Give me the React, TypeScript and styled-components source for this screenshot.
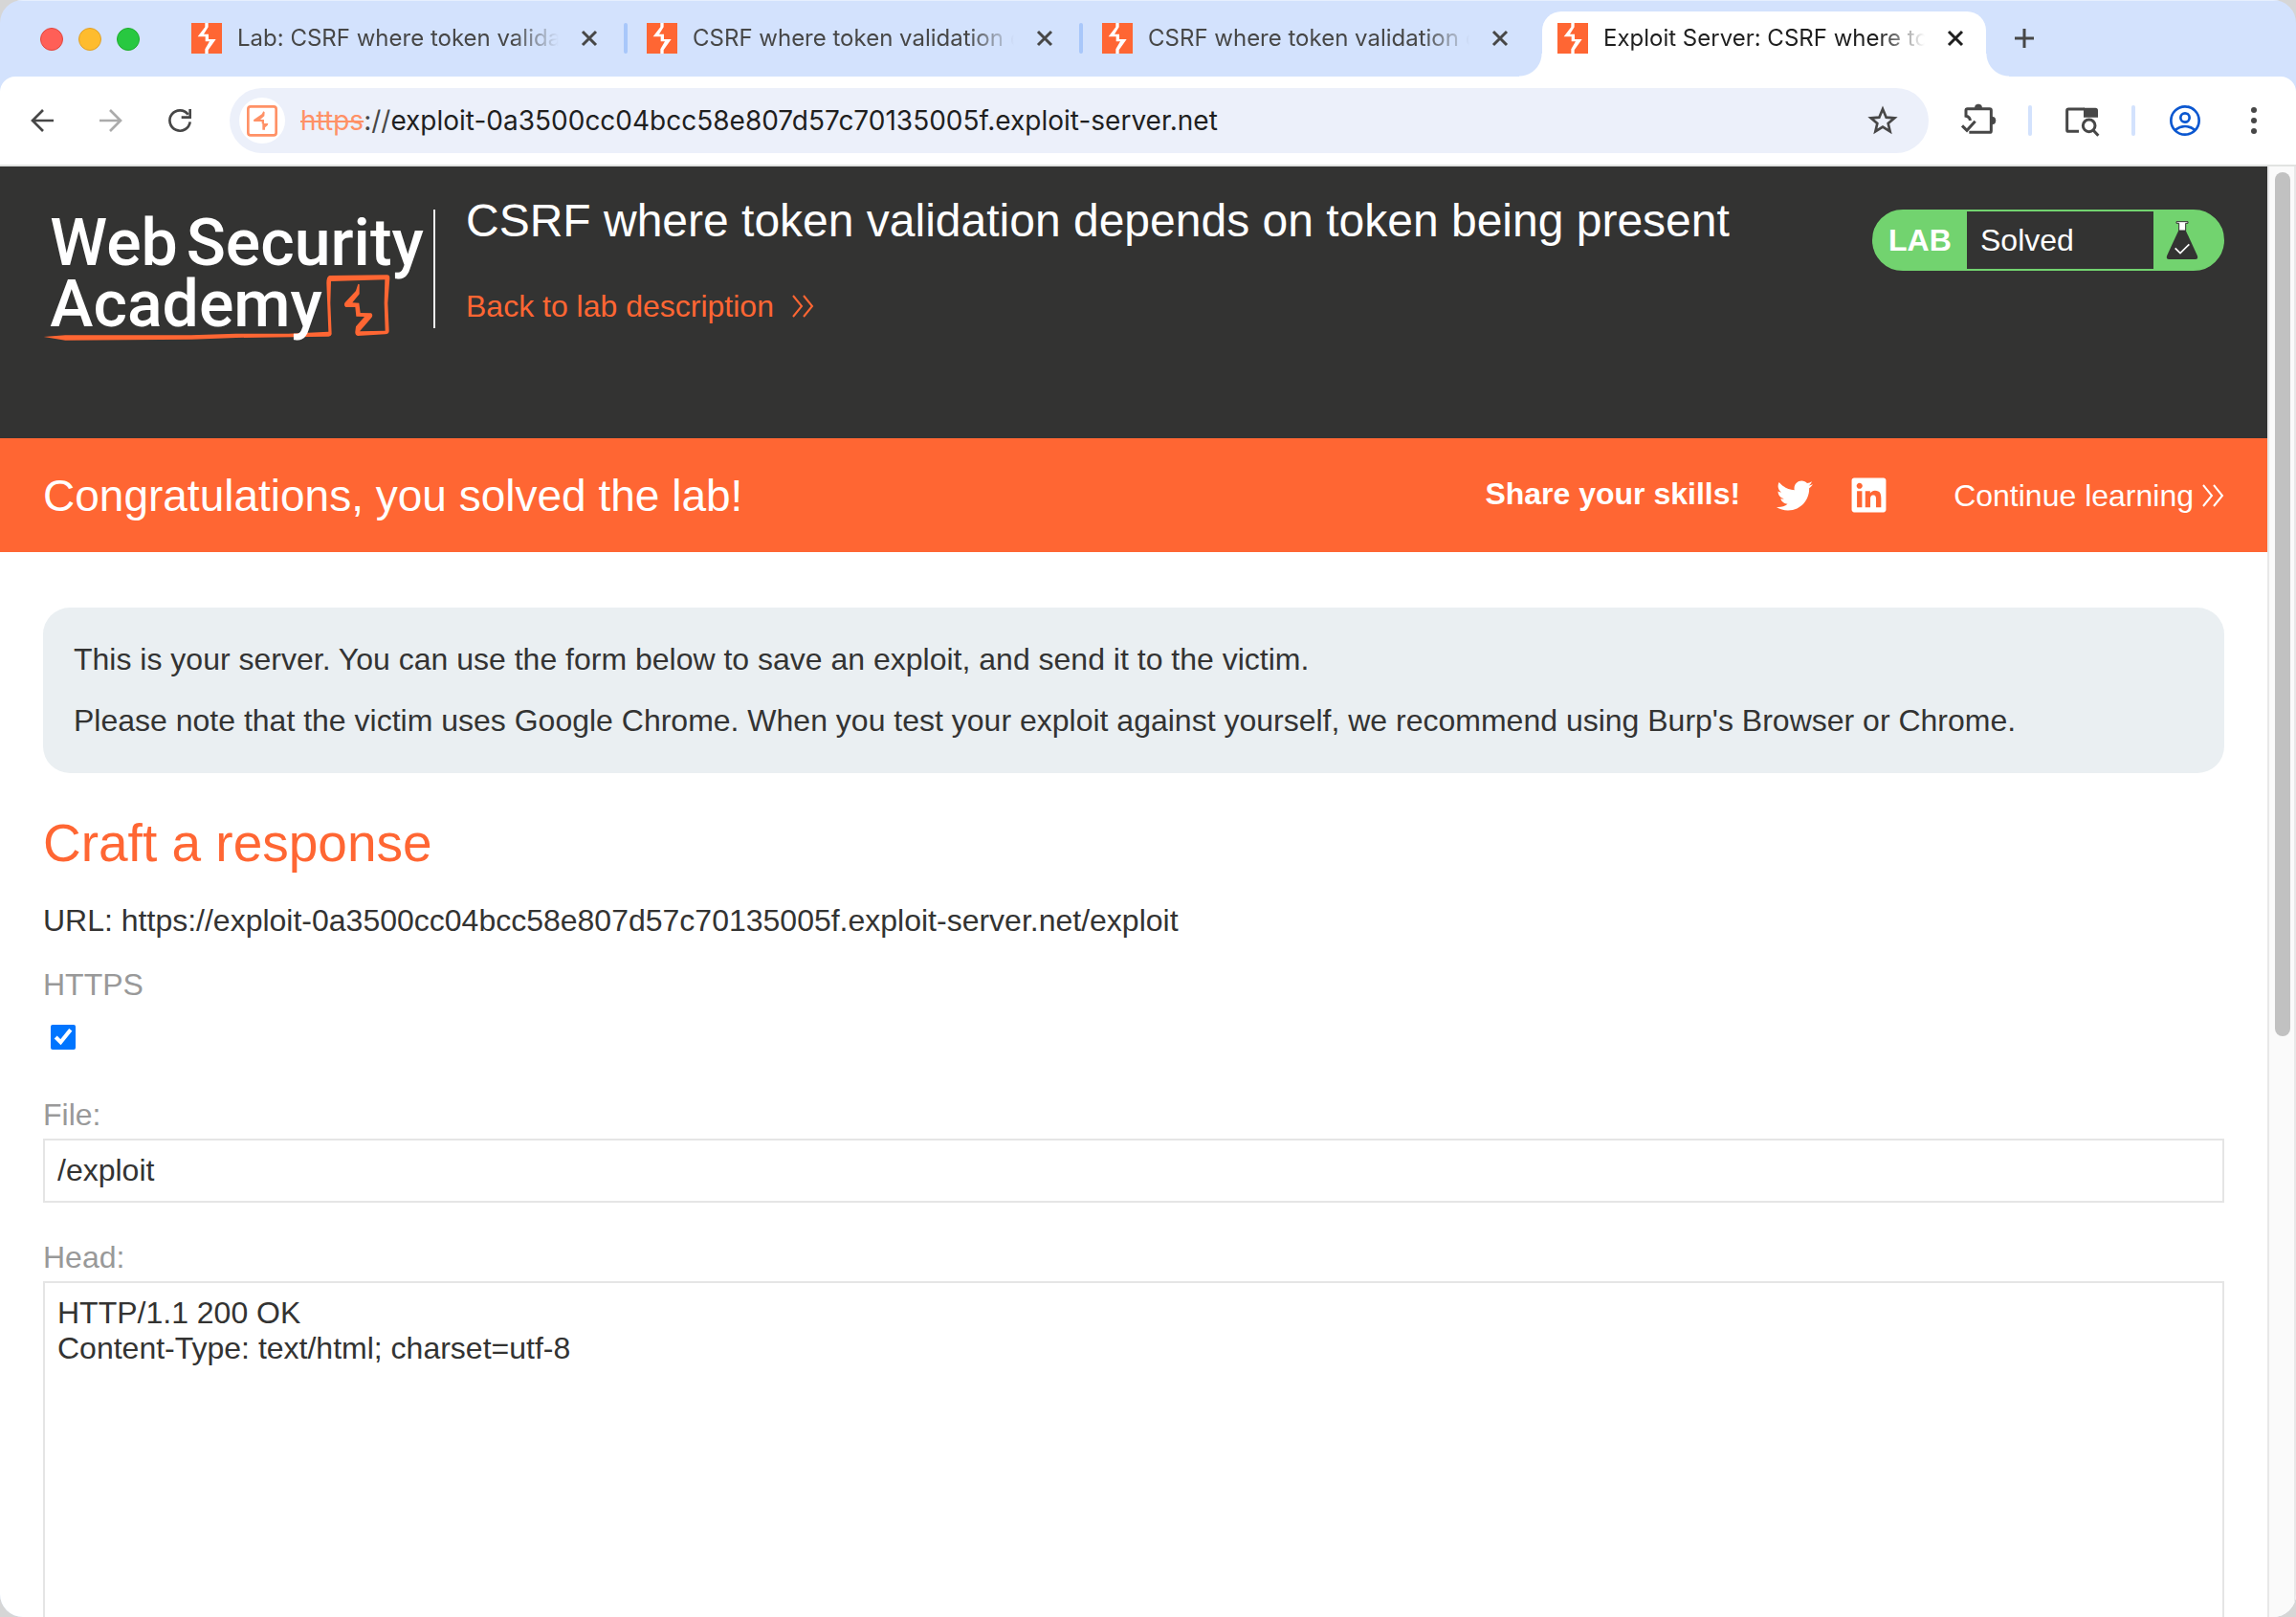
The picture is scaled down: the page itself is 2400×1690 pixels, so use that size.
import React from "react";
import styled, { createGlobalStyle, css } from "styled-components";
import { FaLinkedin, FaTwitter } from "react-icons/fa";

const color = {
  orange: "#ff6633",
  dark: "#333332",
  green: "#72d36f",
  strip: "#d3e2fd",
  separator: "#a8c7fa",
  icon: "#474747",
  label: "#999999",
  line: "#e5e5e5",
};

const GlobalStyle = createGlobalStyle`
  * { box-sizing: border-box; }
  body { margin: 0; background: #d6d6d6; }
  button, input, textarea { font: inherit; color: inherit; margin: 0; }
  p, h1, h2 { margin: 0; font-weight: 400; }
`;

const uiFont = `Inter, "Noto Sans", sans-serif`;
const pageFont = `"Liberation Sans", Arial, sans-serif`;

const BrowserWindow = styled.div`
  display: flex;
  flex-direction: column;
  height: 100vh;
  overflow: hidden;
  border-radius: 24px;
  background: ${color.strip};
`;

/* ---------- Tab strip ---------- */

const TabStrip = styled.div`
  display: flex;
  align-items: stretch;
  height: 80px;
  padding: 11px 24px 0 42px;
  border-top: 1px solid #e6effe;
  font-family: ${uiFont};
  font-size: 24px;
`;

const WindowControls = styled.div`
  display: flex;
  gap: 16px;
  padding: 17px 38px 0 0;
`;

const Light = styled.button<{ $fill: string; $edge: string }>`
  width: 24px;
  height: 24px;
  padding: 0;
  border: 1px solid ${(p) => p.$edge};
  border-radius: 50%;
  background: ${(p) => p.$fill};
`;

const Tabs = styled.div`
  display: flex;
  flex: 0 1 1892px;
  min-width: 0;
`;

const TabSeparator = styled.span<{ $visible: boolean }>`
  flex: none;
  width: 4px;
  height: 32px;
  margin: 12px 4px 0;
  border-radius: 2px;
  background: ${(p) => (p.$visible ? color.separator : "transparent")};
`;

const Tab = styled.div<{ $active: boolean }>`
  position: relative;
  display: flex;
  flex: 1 1 464px;
  align-items: center;
  gap: 16px;
  min-width: 0;
  padding: 0 16px 12px;
  color: ${(p) => (p.$active ? "#1f1f1f" : color.icon)};
  ${(p) =>
    p.$active &&
    css`
      border-radius: 20px 20px 0 0;
      background: #fff;
      &::before,
      &::after {
        content: "";
        position: absolute;
        bottom: 0;
        width: 24px;
        height: 24px;
      }
      &::before {
        right: 100%;
        background: radial-gradient(circle at 0 0, transparent 23px, #fff 24px);
      }
      &::after {
        left: 100%;
        background: radial-gradient(circle at 100% 0, transparent 23px, #fff 24px);
      }
    `}
`;

const TabTitle = styled.span`
  flex: 1;
  min-width: 0;
  overflow: hidden;
  line-height: 32px;
  white-space: nowrap;
  mask-image: linear-gradient(to left, transparent, #000 48px);
`;

const IconButton = styled.button<{ $size: number }>`
  display: flex;
  flex: none;
  align-items: center;
  justify-content: center;
  width: ${(p) => p.$size}px;
  height: ${(p) => p.$size}px;
  padding: 0;
  border: 0;
  background: none;
  svg {
    display: block;
    width: 100%;
    height: 100%;
  }
`;

const NewTab = styled(IconButton)`
  margin: 12px 0 0 24px;
  color: ${color.icon};
`;

/* ---------- Toolbar ---------- */

const Toolbar = styled.div`
  display: flex;
  flex: none;
  align-items: center;
  gap: 32px;
  height: 94px;
  padding: 0 24px;
  border-bottom: 2px solid #e1e3e1;
  border-radius: 16px 16px 0 0;
  background: #fff;
  color: ${color.icon};
  font-family: ${uiFont};
`;

const Omnibox = styled.div`
  display: flex;
  flex: 1;
  align-items: center;
  min-width: 0;
  height: 68px;
  padding: 0 28px 0 10px;
  border-radius: 34px;
  background: #ecf0fa;
  font-size: 28px;
  line-height: 36px;
`;

const SiteInfo = styled(IconButton)`
  margin-right: 16px;
  border-radius: 50%;
  background: #fff;
`;

const Scheme = styled.label`
  white-space: nowrap;
  s { color: #ff9166; }
`;

const AddressInput = styled.input`
  flex: 1;
  min-width: 0;
  padding: 0;
  border: 0;
  outline: 0;
  background: none;
  color: #1f1f1f;
`;

const ToolSeparator = styled.span`
  width: 4px;
  height: 32px;
  border-radius: 2px;
  background: ${color.strip};
`;

/* ---------- Viewport ---------- */

const Viewport = styled.div`
  display: flex;
  flex: 1;
  min-height: 0;
  background: #fff;
`;

const Page = styled.div`
  flex: 1;
  min-width: 0;
  overflow-y: auto;
  scrollbar-width: none;
  color: ${color.dark};
  font-family: ${pageFont};
  font-size: 32px;
  line-height: 40px;
`;

const ScrollTrack = styled.div`
  flex: none;
  width: 30px;
  padding: 6px 4px 0 6px;
  border: solid #e8e8e8;
  border-width: 0 2px;
  background: #fafafa;
`;

const ScrollThumb = styled.div`
  height: 59.8%;
  border-radius: 8px;
  background: #c1c1c1;
`;

const LabHeader = styled.header`
  display: flex;
  align-items: flex-start;
  min-height: 284px;
  padding: 45px 45px 0;
  background: ${color.dark};
  color: #fff;
`;

const LogoLink = styled.a`
  flex: none;
  margin-right: 8px;
  svg { display: block; }
`;

const TitleBlock = styled.div`
  display: flex;
  flex: 1;
  gap: 32px;
  min-width: 0;
  &::before {
    content: "";
    width: 2px;
    height: 124px;
    background: #f2f2f2;
  }
`;

const Titles = styled.div`
  display: flex;
  flex-direction: column;
  align-items: flex-start;
  gap: 41px;
  margin-top: -16px;
`;

const LabTitle = styled.h2`
  font-size: 48px;
  line-height: 56px;
`;

const ArrowLink = styled.a<{ $color: string; $gap: number }>`
  display: flex;
  align-items: center;
  gap: ${(p) => p.$gap}px;
  color: ${(p) => p.$color};
  text-decoration: none;
  white-space: nowrap;
`;

const Badge = styled.div`
  display: flex;
  flex: none;
  width: 368px;
  height: 64px;
  overflow: hidden;
  border: 2px solid ${color.green};
  border-radius: 32px;
  background: ${color.green};
  line-height: 60px;
`;

const BadgeLabel = styled.strong`
  width: 97px;
  padding-left: 15px;
`;

const BadgeStatus = styled.span`
  flex: 1;
  padding-left: 14px;
  background: ${color.dark};
`;

const BadgeIcon = styled.span`
  display: flex;
  align-items: center;
  width: 72px;
  padding-left: 10px;
`;

const Banner = styled.section`
  display: flex;
  align-items: center;
  min-height: 119px;
  padding: 0 45px;
  background: ${color.orange};
  color: #fff;
`;

const BannerText = styled.p`
  flex: 1;
  font-size: 46px;
  line-height: 56px;
`;

const Share = styled.div`
  display: flex;
  align-items: center;
  gap: 38px;
  margin-right: 68px;
  strong { padding-bottom: 4px; }
  a {
    display: flex;
    color: inherit;
  }
`;

const Content = styled.main`
  display: flex;
  flex-direction: column;
  padding: 58px 45px 60px;
`;

const Notice = styled.div`
  display: flex;
  flex-direction: column;
  gap: 24px;
  padding: 34px 32px 35px;
  border-radius: 28px;
  background: #eaeff2;
`;

const Heading = styled.h1`
  margin: 41px 0 29px;
  color: ${color.orange};
  font-size: 55px;
  line-height: 64px;
`;

const Form = styled.form`
  display: flex;
  flex-direction: column;
  margin-top: 27px;
`;

const Field = styled.div`
  display: flex;
  flex-direction: column;
  align-items: flex-start;
  gap: 5px;
  margin-bottom: 37px;
`;

const FieldLabel = styled.label`
  color: ${color.label};
`;

const Checkbox = styled.input`
  && {
    width: 26px;
    height: 26px;
    margin: 17px 8px 11px;
  }
  accent-color: #0075ff;
`;

const boxStyle = css`
  display: block;
  width: 100%;
  padding: 13px;
  border: 2px solid ${color.line};
  border-radius: 0;
  outline: 0;
  background: #fff;
`;

const TextInput = styled.input`
  ${boxStyle}
  height: 67px;
`;

const TextArea = styled.textarea`
  ${boxStyle}
  height: 520px;
  line-height: 37px;
  resize: none;
`;

/* ---------- Icons ---------- */

const Glyph = ({ box, children, width = 8 }: { box: string; children: React.ReactNode; width?: number }) => (
  <svg viewBox={box} width="40" height="40" fill="none" stroke="currentColor" strokeWidth={width} aria-hidden="true">
    {children}
  </svg>
);

const FaviconSvg = styled.svg`
  flex: none;
  width: 32px;
  height: 32px;
`;

const Favicon = () => (
  <FaviconSvg viewBox="600 72 96 96" aria-hidden="true">
    <path d="M600 72h96v96h-96z" fill={color.orange} />
    <path d="M643 72h10v13l-14 22h15v16h23l-24 34v11h-10v-14l14-24h-13v-15h-24l23-30z" fill="#fff" />
  </FaviconSvg>
);

const SiteIcon = () => (
  <svg viewBox="750 307 144 144" aria-hidden="true">
    <rect x="778" y="335" width="88" height="90" rx="8" fill="#fff" stroke="#ff9166" strokeWidth="8" />
    <path
      d="M826 350l4 3-1 12-13 11h12v12h13l-2 6-8 7v7h-8v-19h-2v-7h-25l-1-5 26-18z"
      fill="#ff9166"
    />
  </svg>
);

const CloseIcon = () => (
  <svg viewBox="0 0 32 32" fill="none" stroke="currentColor" strokeWidth="3" aria-hidden="true">
    <path d="M9 9l14 14M23 9L9 23" />
  </svg>
);

const PlusIcon = () => (
  <svg viewBox="0 0 32 32" fill="none" stroke="currentColor" strokeWidth="3" aria-hidden="true">
    <path d="M6 16h20M16 6v20" />
  </svg>
);

const DoubleChevron = () => (
  <svg width="24" height="24" viewBox="0 0 24 24" fill="none" stroke="currentColor" strokeWidth="2" aria-hidden="true">
    <path d="M2 1l9 11-9 11M13 1l9 11-9 11" />
  </svg>
);

const FlaskIcon = () => (
  <svg viewBox="1083 123 120 120" width="40" height="40" aria-hidden="true">
    <path d="M1132 152h22l36 78q5 12-5 13h-84q-10-1-5-13z" fill={color.dark} />
    <path d="M1125 125h36v5h-7v23h-21v-23h-8z" fill="#fff" stroke={color.dark} strokeWidth="3" />
    <path d="M1121 208l16 16 28-28" fill="none" stroke="#fff" strokeWidth="5" />
  </svg>
);

const AcademyLogo = () => (
  <svg viewBox="135 147 1200 420" width="400" height="140" role="img" aria-label="Web Security Academy">
    <path
      fill={color.orange}
      d="M137 546L205 541L600 541L740 536L905 536L1030 530L1024 378Q1024 356 1034 354L1214 352Q1222 352 1222 362L1216 440L1220 528Q1219 538 1208 538L1122 543Q1113 541 1114 530L1116 514L1143 483L1117 482L1114 453L1084 453Q1076 446 1083 437L1116 402L1123 380L1127 382L1127 412L1105 439L1126 440L1130 471L1164 472Q1171 477 1165 486L1128 529L1208 527L1205 440L1207 367L1038 372L1036 440L1040 538Q1038 546 1028 545L740 549L600 554L205 557Z"
    />
    <g fill="#fff" fontFamily="Roboto, 'Noto Sans', sans-serif" fontWeight="500" fontSize="204">
      <text x="157" y="320">Web</text>
      <text x="584" y="320">Security</text>
      <text x="157" y="514">Academy</text>
    </g>
  </svg>
);

/* ---------- App ---------- */

const tabs = [
  "Lab: CSRF where token valida",
  "CSRF where token validation d",
  "CSRF where token validation d",
  "Exploit Server: CSRF where to",
];

export default function App() {
  const active = tabs.length - 1;
  return (
    <BrowserWindow>
      <GlobalStyle />
      <TabStrip>
        <WindowControls>
          <Light $fill="#ff5f57" $edge="#e2463f" aria-label="Close window" />
          <Light $fill="#febc2e" $edge="#e0a028" aria-label="Minimise window" />
          <Light $fill="#28c840" $edge="#1dad2b" aria-label="Zoom window" />
        </WindowControls>
        <Tabs>
          {tabs.map((title, i) => (
            <React.Fragment key={i}>
              {i > 0 && <TabSeparator $visible={i !== active} />}
              <Tab $active={i === active}>
                <Favicon />
                <TabTitle>{title}</TabTitle>
                <IconButton $size={32} aria-label="Close tab">
                  <CloseIcon />
                </IconButton>
              </Tab>
            </React.Fragment>
          ))}
        </Tabs>
        <NewTab $size={32} aria-label="New tab">
          <PlusIcon />
        </NewTab>
      </TabStrip>

      <Toolbar>
        <IconButton $size={40} aria-label="Back">
          <Glyph box="72 318 120 120">
            <path d="M168 378H102M135 345l-33 33 33 33" />
          </Glyph>
        </IconButton>
        <IconButton $size={40} aria-label="Forward" disabled>
          <Glyph box="288 318 120 120">
            <path stroke="#ababab" d="M312 378h66M345 345l33 33-33 33" />
          </Glyph>
        </IconButton>
        <IconButton $size={40} aria-label="Reload">
          <Glyph box="504 318 120 120">
            <path d="M596 382A32 32 0 1 1 590 359" />
            <path d="M596 342v26h-27" />
          </Glyph>
        </IconButton>
        <Omnibox>
          <SiteInfo $size={48} aria-label="Site information">
            <SiteIcon />
          </SiteInfo>
          <Scheme htmlFor="address">
            <s>https</s>://
          </Scheme>
          <AddressInput id="address" defaultValue="exploit-0a3500cc04bcc58e807d57c70135005f.exploit-server.net" />
          <IconButton $size={40} aria-label="Bookmark">
            <Glyph box="54 318 120 120">
              <path d="M114 342l11 26 26 2-20 17 6 25-23-14-23 14 6-25-20-17 26-2z" />
            </Glyph>
          </IconButton>
        </Omnibox>
        <IconButton $size={40} aria-label="Extensions">
          <Glyph box="354 318 120 120" width={9}>
            <path d="M385 415h64q5 0 5-5v-64q0-5-5-5h-69q-5 0-5 5v18q13 3 13 14" />
            <path d="M403 338a11 11 0 0 1 22 0zM456 366a12 12 0 0 1 0 24z" fill="currentColor" strokeWidth="2" />
            <path d="M363 394l15 15 26-29" />
          </Glyph>
        </IconButton>
        <ToolSeparator />
        <IconButton $size={40} aria-label="Side panel search">
          <Glyph box="678 318 120 120" width={9}>
            <path d="M729 412h-32q-5 0-5-5v-60q0-5 5-5h50" />
            <path d="M744 338h37q8 0 8 8v22h-45z" fill="currentColor" stroke="none" />
            <circle cx="761" cy="394" r="19" />
            <path d="M774 408l16 17" />
          </Glyph>
        </IconButton>
        <ToolSeparator />
        <IconButton $size={40} aria-label="Profile">
          <Glyph box="1002 318 120 120">
            <g stroke="#0b57d0">
              <circle cx="1062" cy="378" r="44" />
              <circle cx="1062" cy="369" r="14" />
              <path d="M1030 408q32-24 64 0" />
            </g>
          </Glyph>
        </IconButton>
        <IconButton $size={40} aria-label="Menu">
          <Glyph box="1218 318 120 120">
            <g fill="currentColor" stroke="none">
              <circle cx="1278" cy="345" r="9" />
              <circle cx="1278" cy="378" r="9" />
              <circle cx="1278" cy="411" r="9" />
            </g>
          </Glyph>
        </IconButton>
      </Toolbar>

      <Viewport>
        <Page>
          <LabHeader>
            <LogoLink href="#academy">
              <AcademyLogo />
            </LogoLink>
            <TitleBlock>
              <Titles>
                <LabTitle>CSRF where token validation depends on token being present</LabTitle>
                <ArrowLink $color={color.orange} $gap={18} href="#description">
                  Back to lab description
                  <DoubleChevron />
                </ArrowLink>
              </Titles>
            </TitleBlock>
            <Badge>
              <BadgeLabel>LAB</BadgeLabel>
              <BadgeStatus>Solved</BadgeStatus>
              <BadgeIcon>
                <FlaskIcon />
              </BadgeIcon>
            </Badge>
          </LabHeader>

          <Banner>
            <BannerText>Congratulations, you solved the lab!</BannerText>
            <Share>
              <strong>Share your skills!</strong>
              <a href="#twitter" aria-label="Share on Twitter">
                <FaTwitter size={38} />
              </a>
              <a href="#linkedin" aria-label="Share on LinkedIn">
                <FaLinkedin size={41} />
              </a>
            </Share>
            <ArrowLink $color="#fff" $gap={8} href="#continue">
              Continue learning
              <DoubleChevron />
            </ArrowLink>
          </Banner>

          <Content>
            <Notice>
              <p>This is your server. You can use the form below to save an exploit, and send it to the victim.</p>
              <p>
                Please note that the victim uses Google Chrome. When you test your exploit against yourself, we
                recommend using Burp's Browser or Chrome.
              </p>
            </Notice>
            <Heading>Craft a response</Heading>
            <p>URL: https://exploit-0a3500cc04bcc58e807d57c70135005f.exploit-server.net/exploit</p>
            <Form>
              <Field>
                <FieldLabel htmlFor="https">HTTPS</FieldLabel>
                <Checkbox id="https" type="checkbox" defaultChecked />
              </Field>
              <Field>
                <FieldLabel htmlFor="file">File:</FieldLabel>
                <TextInput id="file" defaultValue="/exploit" />
              </Field>
              <Field>
                <FieldLabel htmlFor="head">Head:</FieldLabel>
                <TextArea id="head" defaultValue={"HTTP/1.1 200 OK\nContent-Type: text/html; charset=utf-8"} />
              </Field>
            </Form>
          </Content>
        </Page>
        <ScrollTrack>
          <ScrollThumb />
        </ScrollTrack>
      </Viewport>
    </BrowserWindow>
  );
}
